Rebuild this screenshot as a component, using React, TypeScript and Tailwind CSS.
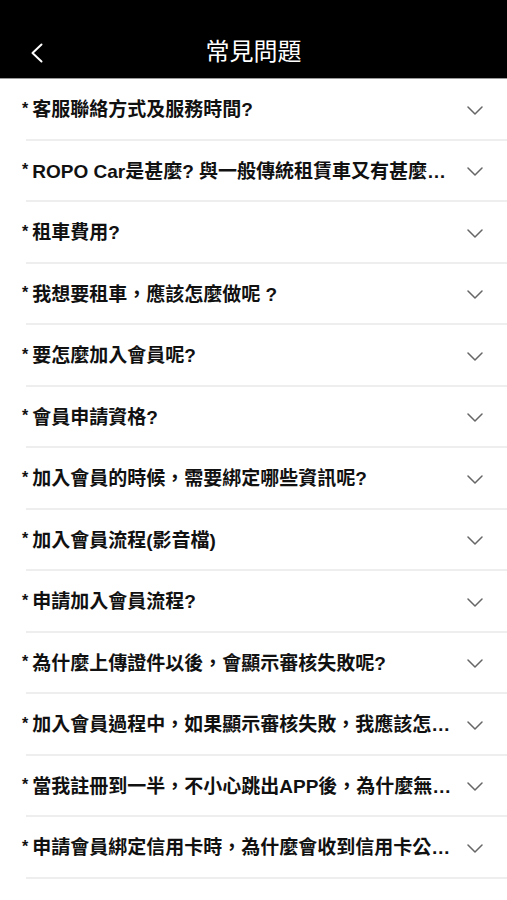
import React from "react";

const items = [
  "客服聯絡方式及服務時間?",
  "ROPO Car是甚麼? 與一般傳統租賃車又有甚麼不同?",
  "租車費用?",
  "我想要租車，應該怎麼做呢 ?",
  "要怎麼加入會員呢?",
  "會員申請資格?",
  "加入會員的時候，需要綁定哪些資訊呢?",
  "加入會員流程(影音檔)",
  "申請加入會員流程?",
  "為什麼上傳證件以後，會顯示審核失敗呢?",
  "加入會員過程中，如果顯示審核失敗，我應該怎麼辦?",
  "當我註冊到一半，不小心跳出APP後，為什麼無法再繼續註冊?",
  "申請會員綁定信用卡時，為什麼會收到信用卡公司的簡訊?",
];

const font = { fontFamily: '"Liberation Sans", "Noto Sans CJK TC", sans-serif' };

export default function App() {
  return (
    <div className="w-[507px] h-[900px] bg-white overflow-hidden" style={font}>
      <div className="relative h-[79px] bg-black border-b border-[#9a9a9a] flex items-end justify-center pb-[13px]">
        <svg
          className="absolute left-[30px] top-[43px]"
          width="14"
          height="20"
          viewBox="0 0 14 20"
          fill="none"
        >
          <path d="M11.5 1.5L2.5 10l9 8.5" stroke="white" strokeWidth="2" strokeLinecap="round" strokeLinejoin="round" />
        </svg>
        <div className="text-white text-[24px] leading-[30px]" style={{ fontFamily: '"Noto Sans CJK TC", sans-serif' }}>
          常見問題
        </div>
      </div>
      <div className="flex flex-col">
        {items.map((t, i) => (
          <div key={i} className="flex flex-col">
            <div className="h-[59.5px] flex items-center pl-[22px] pr-[24px] pt-[3px]">
              <div className="flex-1 min-w-0 flex items-center pr-[10px]">
                <span className="text-[16px] font-bold text-[#111] mr-[4px] -mt-[3px]">*</span>
                <span className="truncate text-[19px] font-bold text-[#111] leading-[24px]">{t}</span>
              </div>
              <svg width="16" height="9" viewBox="0 0 16 9" fill="none">
                <path d="M1 1l7 7 7-7" stroke="#666" strokeWidth="1.5" strokeLinecap="round" strokeLinejoin="round" />
              </svg>
            </div>
            <div className="ml-[26px] h-[2px] bg-[#eeeeee]" />
          </div>
        ))}
      </div>
    </div>
  );
}
